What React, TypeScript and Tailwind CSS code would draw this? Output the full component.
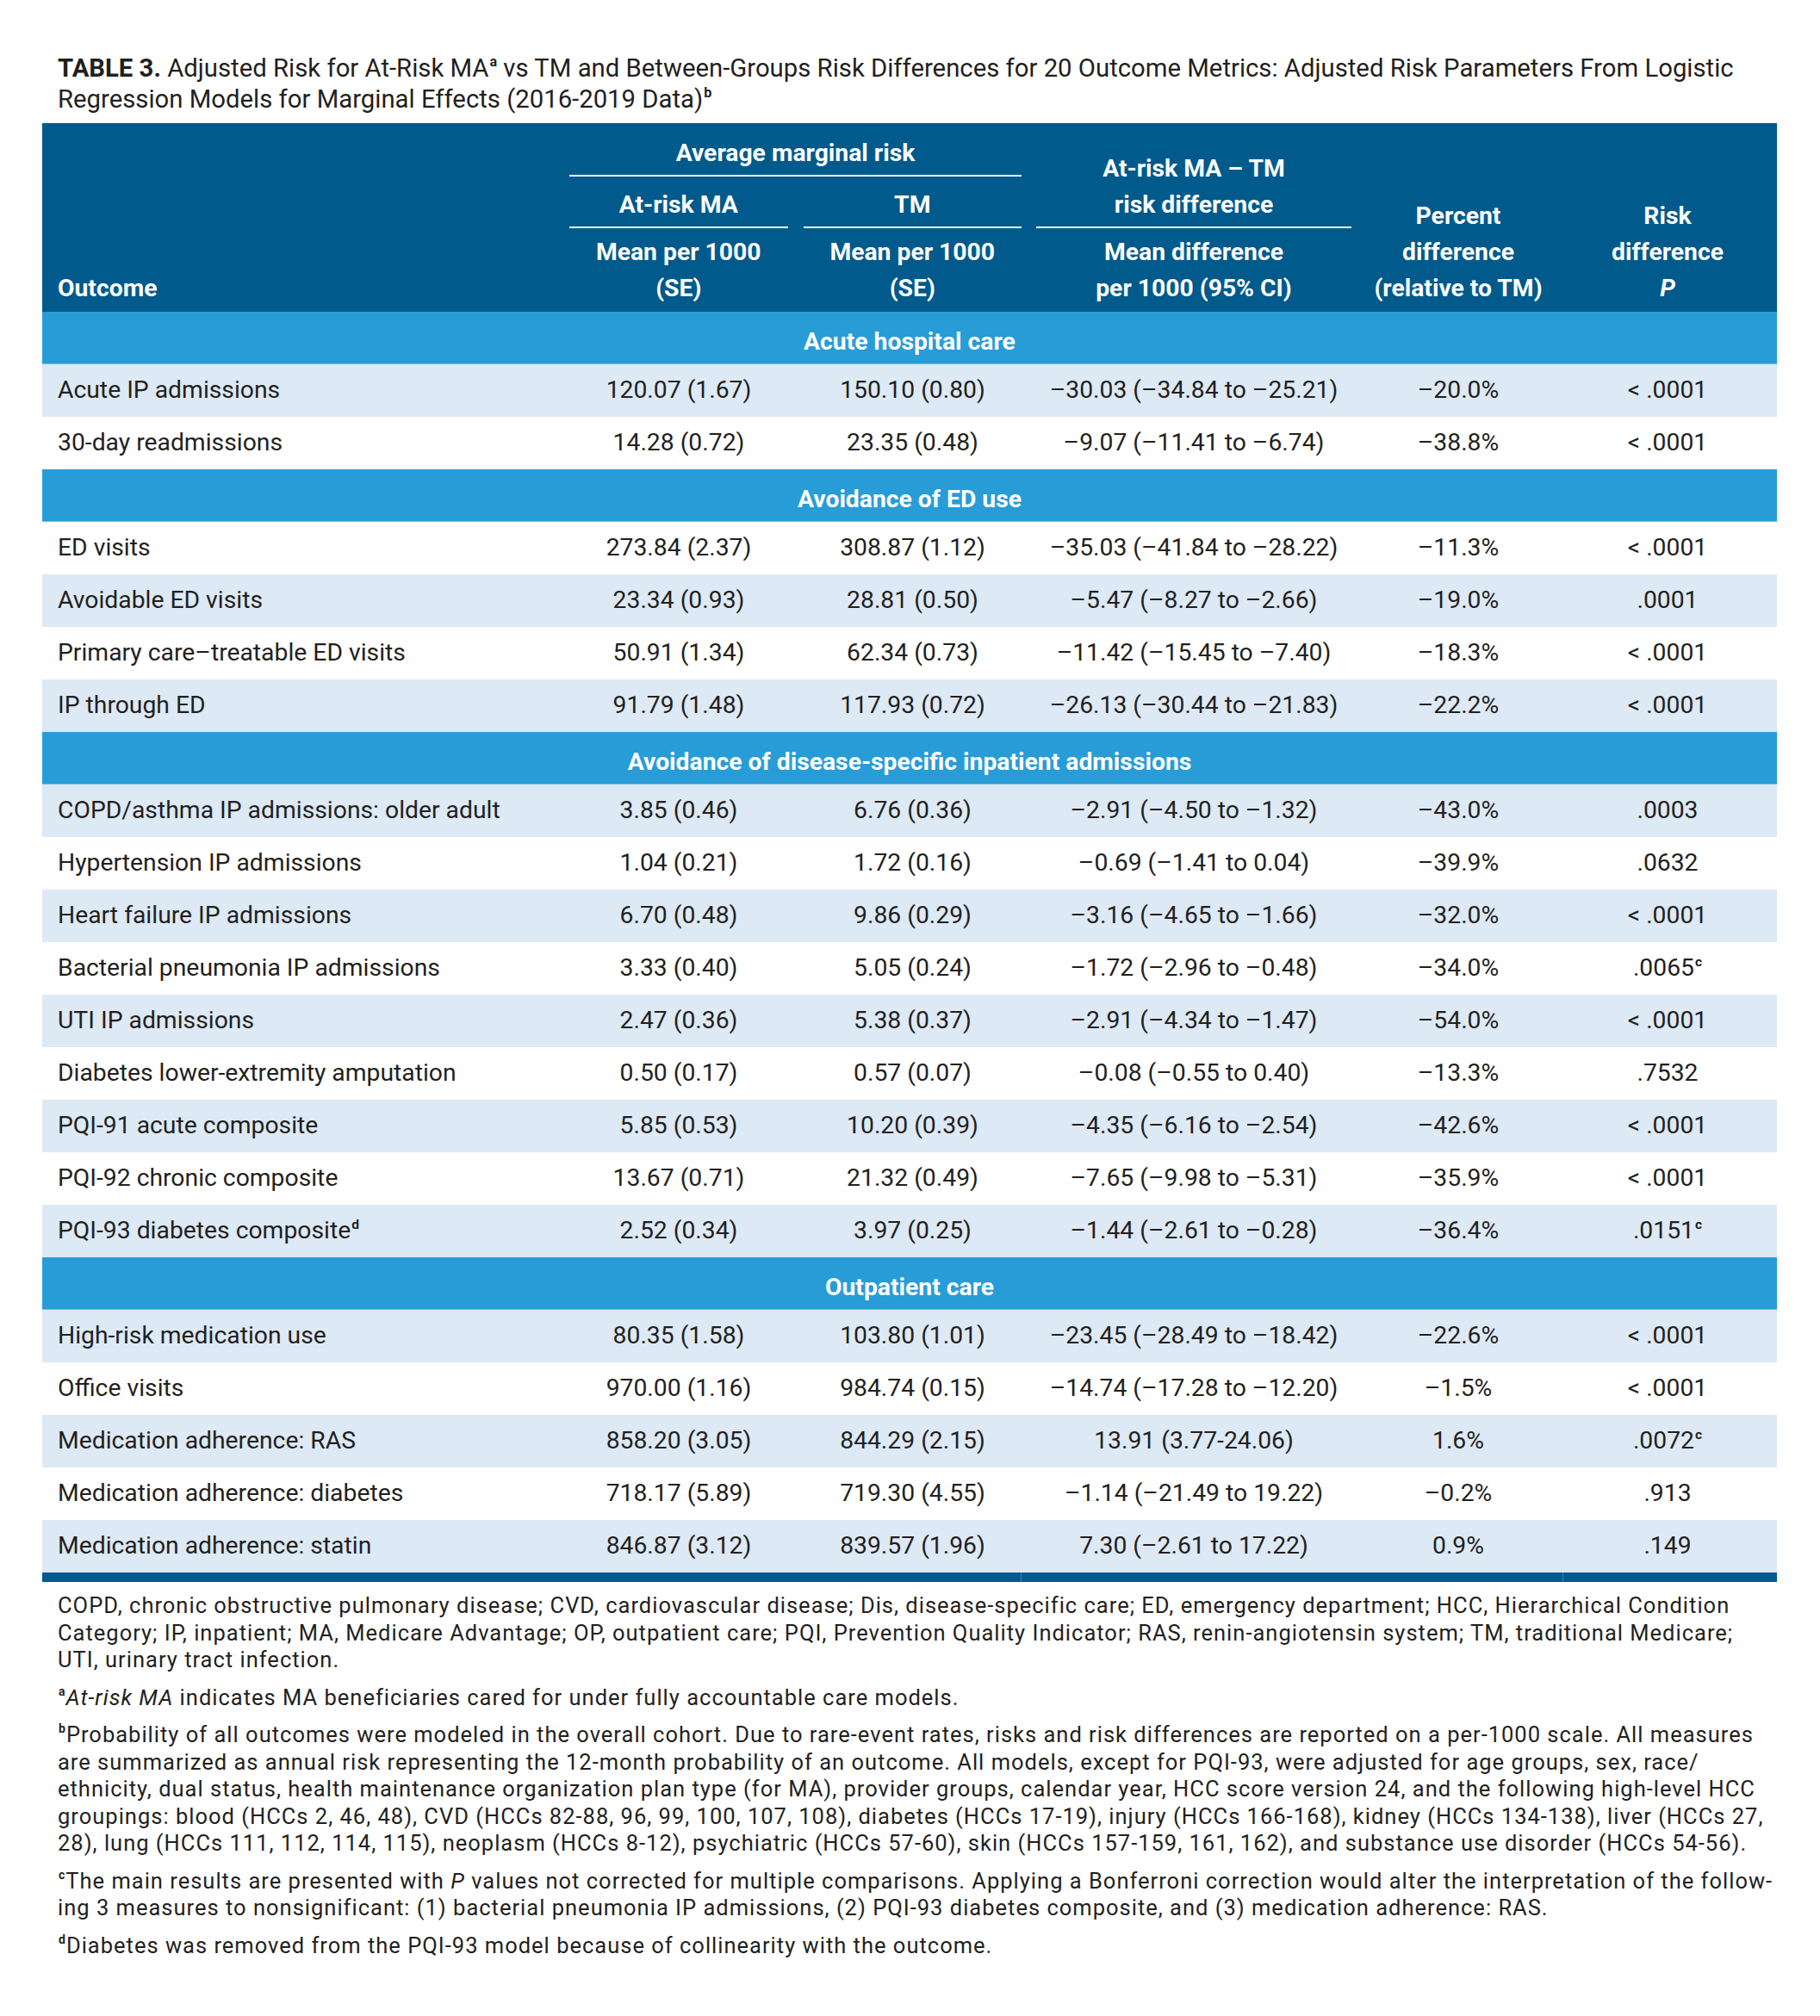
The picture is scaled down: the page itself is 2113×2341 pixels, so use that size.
type Row = {
  name: React.ReactNode;
  ma: string;
  tm: string;
  diff: string;
  pct: string;
  p: React.ReactNode;
  shade: boolean;
};

type Section = { title: string; rows: Row[] };

const Sup = ({ children }: { children: React.ReactNode }) => (
  <sup className="text-[0.55em] font-bold -top-[0.75em] ml-[1px]">{children}</sup>
);

const sections: Section[] = [
  {
    title: "Acute hospital care",
    rows: [
      { name: "Acute IP admissions", ma: "120.07 (1.67)", tm: "150.10 (0.80)", diff: "–30.03 (–34.84 to –25.21)", pct: "–20.0%", p: "< .0001", shade: true },
      { name: "30-day readmissions", ma: "14.28 (0.72)", tm: "23.35 (0.48)", diff: "–9.07 (–11.41 to –6.74)", pct: "–38.8%", p: "< .0001", shade: false },
    ],
  },
  {
    title: "Avoidance of ED use",
    rows: [
      { name: "ED visits", ma: "273.84 (2.37)", tm: "308.87 (1.12)", diff: "–35.03 (–41.84 to –28.22)", pct: "–11.3%", p: "< .0001", shade: false },
      { name: "Avoidable ED visits", ma: "23.34 (0.93)", tm: "28.81 (0.50)", diff: "–5.47 (–8.27 to –2.66)", pct: "–19.0%", p: ".0001", shade: true },
      { name: "Primary care–treatable ED visits", ma: "50.91 (1.34)", tm: "62.34 (0.73)", diff: "–11.42 (–15.45 to –7.40)", pct: "–18.3%", p: "< .0001", shade: false },
      { name: "IP through ED", ma: "91.79 (1.48)", tm: "117.93 (0.72)", diff: "–26.13 (–30.44 to –21.83)", pct: "–22.2%", p: "< .0001", shade: true },
    ],
  },
  {
    title: "Avoidance of disease-specific inpatient admissions",
    rows: [
      { name: "COPD/asthma IP admissions: older adult", ma: "3.85 (0.46)", tm: "6.76 (0.36)", diff: "–2.91 (–4.50 to –1.32)", pct: "–43.0%", p: ".0003", shade: true },
      { name: "Hypertension IP admissions", ma: "1.04 (0.21)", tm: "1.72 (0.16)", diff: "–0.69 (–1.41 to 0.04)", pct: "–39.9%", p: ".0632", shade: false },
      { name: "Heart failure IP admissions", ma: "6.70 (0.48)", tm: "9.86 (0.29)", diff: "–3.16 (–4.65 to –1.66)", pct: "–32.0%", p: "< .0001", shade: true },
      { name: "Bacterial pneumonia IP admissions", ma: "3.33 (0.40)", tm: "5.05 (0.24)", diff: "–1.72 (–2.96 to –0.48)", pct: "–34.0%", p: <>.0065<Sup>c</Sup></>, shade: false },
      { name: "UTI IP admissions", ma: "2.47 (0.36)", tm: "5.38 (0.37)", diff: "–2.91 (–4.34 to –1.47)", pct: "–54.0%", p: "< .0001", shade: true },
      { name: "Diabetes lower-extremity amputation", ma: "0.50 (0.17)", tm: "0.57 (0.07)", diff: "–0.08 (–0.55 to 0.40)", pct: "–13.3%", p: ".7532", shade: false },
      { name: "PQI-91 acute composite", ma: "5.85 (0.53)", tm: "10.20 (0.39)", diff: "–4.35 (–6.16 to –2.54)", pct: "–42.6%", p: "< .0001", shade: true },
      { name: "PQI-92 chronic composite", ma: "13.67 (0.71)", tm: "21.32 (0.49)", diff: "–7.65 (–9.98 to –5.31)", pct: "–35.9%", p: "< .0001", shade: false },
      { name: <>PQI-93 diabetes composite<Sup>d</Sup></>, ma: "2.52 (0.34)", tm: "3.97 (0.25)", diff: "–1.44 (–2.61 to –0.28)", pct: "–36.4%", p: <>.0151<Sup>c</Sup></>, shade: true },
    ],
  },
  {
    title: "Outpatient care",
    rows: [
      { name: "High-risk medication use", ma: "80.35 (1.58)", tm: "103.80 (1.01)", diff: "–23.45 (–28.49 to –18.42)", pct: "–22.6%", p: "< .0001", shade: true },
      { name: "Office visits", ma: "970.00 (1.16)", tm: "984.74 (0.15)", diff: "–14.74 (–17.28 to –12.20)", pct: "–1.5%", p: "< .0001", shade: false },
      { name: "Medication adherence: RAS", ma: "858.20 (3.05)", tm: "844.29 (2.15)", diff: "13.91 (3.77-24.06)", pct: "1.6%", p: <>.0072<Sup>c</Sup></>, shade: true },
      { name: "Medication adherence: diabetes", ma: "718.17 (5.89)", tm: "719.30 (4.55)", diff: "–1.14 (–21.49 to 19.22)", pct: "–0.2%", p: ".913", shade: false },
      { name: "Medication adherence: statin", ma: "846.87 (3.12)", tm: "839.57 (1.96)", diff: "7.30 (–2.61 to 17.22)", pct: "0.9%", p: ".149", shade: true },
    ],
  },
];

const cols = "grid grid-cols-[603px_272px_271px_382px_232px_254px]";

function Header() {
  return (
    <div className={`${cols} h-[219px] bg-[#005a8c] text-white font-bold leading-[42px]`}>
      <div className="flex items-end pl-[18px] pb-[6px]">Outcome</div>
      <div className="col-span-2 flex flex-col justify-end px-[9px] pb-[6px] text-center">
        <div>Average marginal risk</div>
        <div className="mt-[4px] h-[2px] bg-white" />
        <div className="mt-[12px] grid grid-cols-2 gap-[18px]">
          {["At-risk MA", "TM"].map((t) => (
            <div key={t}>
              <div>{t}</div>
              <div className="mt-[4px] h-[2px] bg-white" />
              <div className="mt-[7px]">Mean per 1000</div>
              <div>(SE)</div>
            </div>
          ))}
        </div>
      </div>
      <div className="flex flex-col justify-end px-[8px] pb-[6px] text-center">
        <div>At-risk MA – TM</div>
        <div>risk difference</div>
        <div className="mt-[4px] h-[2px] bg-white" />
        <div className="mt-[7px]">Mean difference</div>
        <div>per 1000 (95% CI)</div>
      </div>
      <div className="flex flex-col justify-end pb-[6px] text-center">
        <div>Percent</div>
        <div>difference</div>
        <div>(relative to TM)</div>
      </div>
      <div className="flex flex-col justify-end pb-[6px] text-center">
        <div>Risk</div>
        <div>difference</div>
        <div className="italic">P</div>
      </div>
    </div>
  );
}

function DataRow({ r }: { r: Row }) {
  return (
    <div className={`${cols} h-[61px] items-center ${r.shade ? "bg-[#dde9f5]" : "bg-white"}`}>
      <div className="pl-[18px]">{r.name}</div>
      <div className="text-center">{r.ma}</div>
      <div className="text-center">{r.tm}</div>
      <div className="text-center">{r.diff}</div>
      <div className="text-center">{r.pct}</div>
      <div className="text-center">{r.p}</div>
    </div>
  );
}

export default function App() {
  return (
    <div className="w-[2113px] min-h-[2341px] bg-white text-[#231f20] font-['Roboto',sans-serif]">
      <div className="pt-[61px] pl-[67px] pr-[40px] text-[29.3px] leading-[36px]">
        <span className="font-bold">TABLE 3.</span> Adjusted Risk for At-Risk MA<Sup>a</Sup> vs TM and
        Between-Groups Risk Differences for 20 Outcome Metrics: Adjusted Risk Parameters From Logistic
        <br />
        Regression Models for Marginal Effects (2016-2019 Data)<Sup>b</Sup>
      </div>

      <div className="mx-[49px] mt-[10px] w-[2014px] text-[28.3px]">
        <Header />
        {sections.map((s) => (
          <div key={s.title}>
            <div className="h-[61px] pt-[10px] flex items-center justify-center bg-[#289cd7] text-white font-bold border-b border-[#6fbde6]">
              {s.title}
            </div>
            {s.rows.map((r, i) => (
              <DataRow key={i} r={r} />
            ))}
          </div>
        ))}
        <div className="grid grid-cols-[1137px_629px_248px] h-[11px] bg-[#005a8c]">
          <div className="border-r border-[#3d7ea6]" />
          <div className="border-r border-[#3d7ea6]" />
          <div />
        </div>
      </div>

      <div className="mt-[12px] pl-[67px] pr-[30px] text-[25.5px] tracking-[1px] leading-[31.5px] whitespace-nowrap flex flex-col gap-[12px]">
        <p>
          COPD, chronic obstructive pulmonary disease; CVD, cardiovascular disease; Dis, disease-specific care; ED, emergency department; HCC, Hierarchical Condition
          <br />
          Category; IP, inpatient; MA, Medicare Advantage; OP, outpatient care; PQI, Prevention Quality Indicator; RAS, renin-angiotensin system; TM, traditional Medicare;
          <br />
          UTI, urinary tract infection.
        </p>
        <p>
          <Sup>a</Sup>
          <i>At-risk MA</i> indicates MA beneficiaries cared for under fully accountable care models.
        </p>
        <p>
          <Sup>b</Sup>Probability of all outcomes were modeled in the overall cohort. Due to rare-event rates, risks and risk differences are reported on a per-1000 scale. All measures
          <br />
          are summarized as annual risk representing the 12-month probability of an outcome. All models, except for PQI-93, were adjusted for age groups, sex, race/
          <br />
          ethnicity, dual status, health maintenance organization plan type (for MA), provider groups, calendar year, HCC score version 24, and the following high-level HCC
          <br />
          groupings: blood (HCCs 2, 46, 48), CVD (HCCs 82-88, 96, 99, 100, 107, 108), diabetes (HCCs 17-19), injury (HCCs 166-168), kidney (HCCs 134-138), liver (HCCs 27,
          <br />
          28), lung (HCCs 111, 112, 114, 115), neoplasm (HCCs 8-12), psychiatric (HCCs 57-60), skin (HCCs 157-159, 161, 162), and substance use disorder (HCCs 54-56).
        </p>
        <p>
          <Sup>c</Sup>The main results are presented with <i>P</i> values not corrected for multiple comparisons. Applying a Bonferroni correction would alter the interpretation of the follow-
          <br />
          ing 3 measures to nonsignificant: (1) bacterial pneumonia IP admissions, (2) PQI-93 diabetes composite, and (3) medication adherence: RAS.
        </p>
        <p>
          <Sup>d</Sup>Diabetes was removed from the PQI-93 model because of collinearity with the outcome.
        </p>
      </div>
    </div>
  );
}
